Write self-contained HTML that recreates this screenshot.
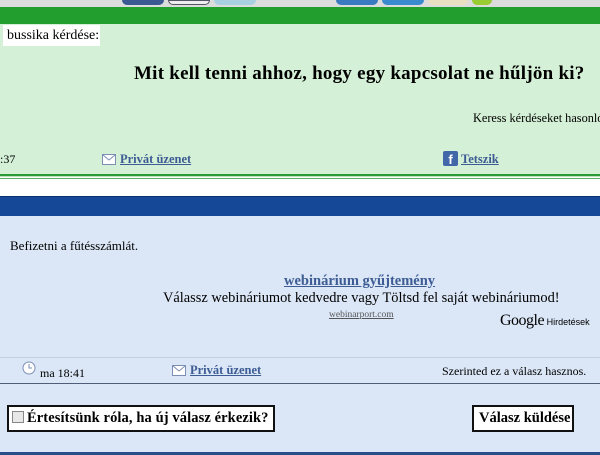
<!DOCTYPE html>
<html><head><meta charset="utf-8"><style>
*{margin:0;padding:0;box-sizing:border-box}
body{width:600px;height:455px;overflow:hidden;position:relative;font-family:"Liberation Serif",serif;background:#dbe7f7}
.a{position:absolute;white-space:nowrap}
a{color:#3d5c94;text-decoration:underline;font-weight:bold}
</style></head><body>
<div class="a" style="left:0;top:0;width:600px;height:7px;background:#dcdcdc"></div>
<div class="a" style="left:122px;top:0;width:42px;height:5px;background:#3b5a94;border-radius:0 0 5px 5px;"></div>
<div class="a" style="left:168px;top:0;width:42px;height:5px;background:#eee;border:1px solid #556;border-radius:0 0 5px 5px;"></div>
<div class="a" style="left:214px;top:0;width:42px;height:5px;background:#a8d0e0;border-radius:0 0 5px 5px;"></div>
<div class="a" style="left:336px;top:0;width:42px;height:5px;background:#3a7ac0;border-radius:0 0 5px 5px;"></div>
<div class="a" style="left:382px;top:0;width:42px;height:5px;background:#3a8ad0;border-radius:0 0 5px 5px;"></div>
<div class="a" style="left:428px;top:0;width:40px;height:5px;background:#e8e0c0;border-radius:0 0 5px 5px;"></div>
<div class="a" style="left:472px;top:0;width:20px;height:5px;background:#9c3;border-radius:0 0 5px 5px;"></div>
<div class="a" style="left:0;top:7px;width:600px;height:17px;background:#229e2e"></div>
<div class="a" style="left:0;top:24px;width:600px;height:151px;background:#d4f0d6"></div>
<div class="a" style="left:3px;top:25px;width:97px;height:21px;background:#fff;font-size:14px;padding:3px 0 0 4px">bussika kérdése:</div>
<div class="a" style="left:134px;top:63px;font-size:19px;font-weight:bold;letter-spacing:0.25px">Mit kell tenni ahhoz, hogy egy kapcsolat ne hűljön ki?</div>
<div class="a" style="left:473px;top:111px;font-size:12.3px">Keress kérdéseket hasonló</div>
<div class="a" style="left:0;top:152px;font-size:12px">:37</div>
<svg class="a" style="left:102px;top:154px" width="14" height="11"><rect x=".5" y=".5" width="13" height="10" fill="#fff" stroke="#7b8fb5"/><path d="M1 1l6 5 6-5" fill="none" stroke="#7b8fb5"/></svg>
<div class="a" style="left:120px;top:152px;font-size:12.5px"><a>Privát üzenet</a></div>
<div class="a" style="left:443px;top:151px;width:15px;height:15px;background:#4267a8;border-radius:2px;color:#fff;font:bold 13px 'Liberation Sans',sans-serif;text-align:center;line-height:17px">f</div>
<div class="a" style="left:461px;top:152px;font-size:12.5px"><a>Tetszik</a></div>
<div class="a" style="left:0;top:174px;width:600px;height:2px;background:#2d9a38"></div>
<div class="a" style="left:0;top:176px;width:600px;height:20px;background:#fff;border-top:1px solid #bde2c0"></div>
<div class="a" style="left:0;top:178px;width:600px;height:1px;background:#5aae62"></div>
<div class="a" style="left:0;top:196px;width:600px;height:20px;background:#154896;border-top:1px solid #0c3070"></div>
<div class="a" style="left:10px;top:238px;font-size:13px">Befizetni a fűtésszámlát.</div>
<div class="a" style="left:284px;top:273px;font-size:14.5px"><a>webinárium gyűjtemény</a></div>
<div class="a" style="left:163px;top:290px;font-size:14.4px">Válassz webináriumot kedvedre vagy Töltsd fel saját webináriumod!</div>
<div class="a" style="left:329px;top:310px;font-size:9.5px;color:#555;text-decoration:underline">webinarport.com</div>
<div class="a" style="left:500px;top:312px;font:16px 'Liberation Serif',serif;letter-spacing:-0.5px">Google<span style="font:9px 'Liberation Sans',sans-serif;letter-spacing:0"> Hirdetések</span></div>
<div class="a" style="left:0;top:357px;width:600px;height:1px;background:#c5cfdd"></div>
<svg class="a" style="left:22px;top:361px" width="14" height="14"><circle cx="7" cy="7" r="6" fill="#fff" stroke="#7b8fb5"/><path d="M7 3v4h3" fill="none" stroke="#7b8fb5"/></svg>
<div class="a" style="left:40px;top:366px;font-size:12px">ma 18:41</div>
<svg class="a" style="left:172px;top:365px" width="14" height="11"><rect x=".5" y=".5" width="13" height="10" fill="#fff" stroke="#7b8fb5"/><path d="M1 1l6 5 6-5" fill="none" stroke="#7b8fb5"/></svg>
<div class="a" style="left:190px;top:363px;font-size:12.5px"><a>Privát üzenet</a></div>
<div class="a" style="left:442px;top:364px;font-size:12px">Szerinted ez a válasz hasznos.</div>
<div class="a" style="left:0;top:383px;width:600px;height:1px;background:#4f5f7a"></div>
<div class="a" style="left:7px;top:405px;width:268px;height:27px;background:#fff;border:2px solid #111;font-size:14.5px;font-weight:bold;padding:3px 0 0 3px;letter-spacing:0.1px"><span style="display:inline-block;width:12px;height:12px;border:1px solid #888;background:#e8e8e8;vertical-align:-1px;margin-right:3px"></span>Értesítsünk róla, ha új válasz érkezik?</div>
<div class="a" style="left:472px;top:405px;width:102px;height:27px;background:#fff;border:2px solid #111;font-size:14.5px;font-weight:bold;padding:3px 0 0 5px">Válasz küldése</div>
<div class="a" style="left:0;top:452px;width:600px;height:3px;background:#2a4e8a"></div>
</body></html>
